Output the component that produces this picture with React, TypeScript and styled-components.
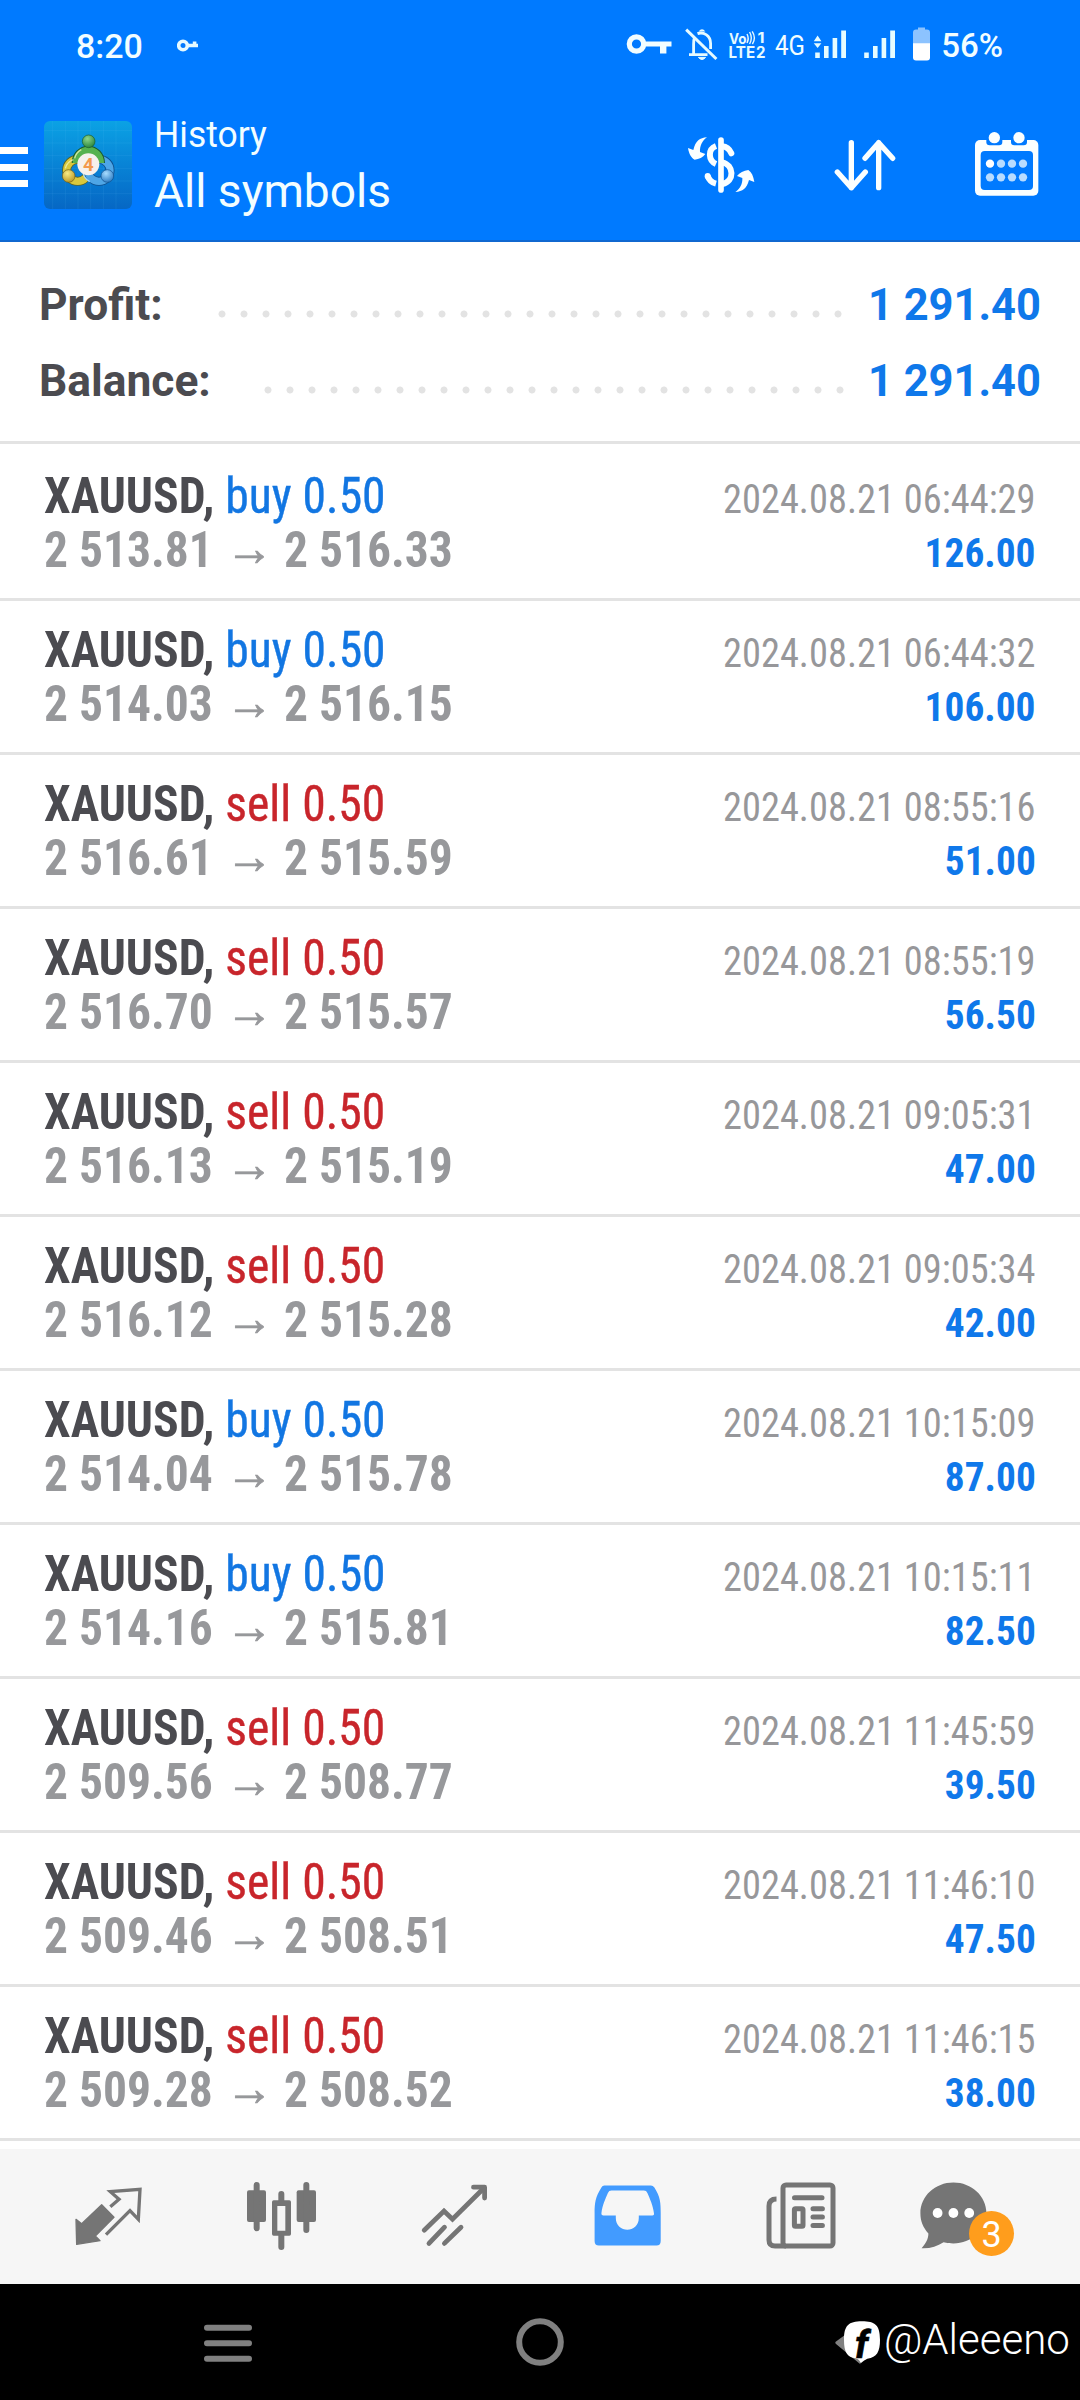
import React from "react";
import styled, { createGlobalStyle } from "styled-components";

const blue = "#007aff";
const valueBlue = "#0f78ea";

const GlobalStyle = createGlobalStyle`
  * { box-sizing: border-box; }
  body { margin: 0; background: #fff; }
  svg { display: block; flex: none; }
`;

const Screen = styled.div`
  width: 1080px;
  height: 2400px;
  display: flex;
  flex-direction: column;
  overflow: hidden;
  background: #fff;
  font-family: Roboto, sans-serif;
  -webkit-font-smoothing: antialiased;
`;

/* ---------- status bar ---------- */

const StatusBar = styled.div`
  flex: none;
  height: 91px;
  padding: 0 77px 0 76px;
  display: flex;
  align-items: center;
  justify-content: space-between;
  background: ${blue};
  color: #f2fdff;
`;

const StatusGroup = styled.div`
  display: flex;
  align-items: center;
`;

const StatusText = styled.span<{ $size: number }>`
  font-size: ${(p) => p.$size}px;
  font-weight: 500;
  line-height: 40px;
`;

const NetworkType = styled.span`
  width: 30px;
  margin: 0 8px 0 9px;
  font-size: 28px;
  line-height: 38px;
  transform: scaleX(0.86);
  transform-origin: left;
  white-space: nowrap;
`;

const Spacer = styled.span<{ $w: number }>`
  flex: none;
  width: ${(p) => p.$w}px;
`;

/* ---------- toolbar ---------- */

const Toolbar = styled.header`
  flex: none;
  height: 151px;
  padding: 0 39px 2px 0;
  display: flex;
  align-items: center;
  background: ${blue};
  border-bottom: 2px solid #1068d0;
  color: #f2fdff;
`;

const MenuButton = styled.div`
  width: 44px;
  display: flex;
  flex-direction: column;
  gap: 9.5px;
  padding-top: 5px;
`;

const MenuBar = styled.span`
  width: 27.5px;
  height: 7px;
  background: #fff;
`;

const Titles = styled.div`
  align-self: flex-start;
  flex: 1;
  padding: 24px 0 0 22px;
`;

const Title = styled.div`
  font-size: 36px;
  line-height: 40px;
  transform: scaleX(0.985);
  transform-origin: left;
`;

const Subtitle = styled.div`
  margin-top: 8px;
  font-size: 47px;
  line-height: 56px;
  transform: scaleX(0.98);
  transform-origin: left;
`;

const ToolbarActions = styled.div`
  display: flex;
  align-items: center;
  gap: 75px;
`;

/* ---------- summary ---------- */

const Summary = styled.section`
  flex: none;
  height: 202px;
  padding: 24px 39px 0;
  border-bottom: 3px solid #e3e3e3;
`;

const SummaryRow = styled.div`
  display: flex;
  align-items: center;
  height: 76px;
  font-size: 45px;
  font-weight: 700;
`;

const SummaryLabel = styled.span`
  color: #4b4b50;
  transform: scaleX(0.985);
  transform-origin: left;
`;

const DotLeader = styled.span<{ $width: number; $right: number }>`
  width: ${(p) => p.$width}px;
  height: 22px;
  margin: 19px ${(p) => p.$right}px 0 auto;
  background: radial-gradient(circle at center, #e3e3e3 3.1px, transparent 3.9px) 0 0 / 22px 22px;
`;

const SummaryValue = styled.span`
  width: 174px;
  display: flex;
  justify-content: flex-end;
  white-space: nowrap;
  color: ${valueBlue};
  transform: scaleX(0.966);
  transform-origin: right;
`;

/* ---------- deals ---------- */

const DealList = styled.main`
  flex: none;
  height: 1705px;
  padding-top: 3px;
`;

const DealRow = styled.article`
  height: 154px;
  padding: 22px 44px 0;
  border-bottom: 3px solid #e3e3e3;
`;

const DealLine = styled.div`
  height: 54px;
  display: flex;
  justify-content: space-between;
  align-items: baseline;
  font-stretch: 75%;
  white-space: pre;
`;

const Left = styled.span`
  font-size: 50px;
  line-height: 54px;
  transform: scaleX(0.952);
  transform-origin: left;
`;

const Right = styled.span`
  font-size: 41px;
  line-height: 41px;
  transform: scaleX(0.937);
  transform-origin: right;
`;

const Symbol = styled.b`
  font-weight: 700;
  color: #4b4b50;
`;

const Side = styled.span<{ $sell: boolean }>`
  color: ${(p) => (p.$sell ? "#c8252b" : "#1276e2")};
  -webkit-text-stroke: 0.4px currentColor;
`;

const Prices = styled(Left)`
  font-weight: 700;
  color: #97989b;
  transform: scaleX(0.95);
`;

const Arrow = styled.span`
  margin-left: 2px;
  line-height: 1;
  vertical-align: 2px;
  -webkit-text-stroke: 0.8px currentColor;
`;

const Time = styled(Right)`
  color: #97979a;
`;

const Profit = styled(Right)`
  font-weight: 700;
  color: ${valueBlue};
  transform: scaleX(0.96);
`;

/* ---------- bottom bars ---------- */

const TabBar = styled.nav`
  flex: none;
  height: 135px;
  padding: 0 21px;
  display: flex;
  background: #f6f6f6;
`;

const Tab = styled.div<{ $inset?: number }>`
  position: relative;
  flex: 1 1 0;
  display: flex;
  align-items: center;
  justify-content: center;
  padding-right: ${(p) => p.$inset ?? 0}px;
  min-width: 173px;
`;

const Badge = styled.span`
  position: absolute;
  left: 83px;
  top: 61.5px;
  width: 45px;
  height: 45px;
  border-radius: 50%;
  background: #ff9d1c;
  color: #fff;
  font-size: 36px;
  line-height: 48px;
  text-align: center;
`;

const SystemBar = styled.footer`
  position: relative;
  flex: none;
  height: 116px;
  background: #000;
  display: flex;
  align-items: center;
`;

const SystemKey = styled.div<{ $grow: number }>`
  flex: ${(p) => p.$grow};
  display: flex;
  justify-content: center;
`;

const Watermark = styled.div`
  position: absolute;
  left: 835px;
  top: 31px;
  display: flex;
  align-items: flex-start;
  color: #fff;
`;

const Handle = styled.span`
  margin-left: 3px;
  font-size: 42px;
  font-weight: 300;
  line-height: 50px;
`;

/* ---------- icons ---------- */

const SmallKey = () => (
  <svg width="22" height="40" viewBox="0 0 22 40" fill="none" stroke="#e6faff">
    <circle cx="6" cy="19.5" r="4.3" strokeWidth="3.6" />
    <path d="M10 19.5H21M17.6 20V15.5" strokeWidth="3.6" />
  </svg>
);

const VpnKey = () => (
  <svg width="47" height="40" viewBox="0 0 47 40">
    <circle cx="10.5" cy="18" r="7.2" fill="none" stroke="#f2fdff" strokeWidth="5.2" />
    <path d="M17 15.5H45.5V20.6H40.4V27.5H34V20.6H17Z" fill="#f2fdff" />
  </svg>
);

const MutedBell = () => (
  <svg width="33" height="40" viewBox="0 0 33 40" fill="none" stroke="#e6faff" strokeWidth="2.8">
    <path d="M9.5 11.5C8.6 13.5 8.6 16 8.6 18V28.5M4 28.6H22.5" />
    <path d="M12.5 7.6C18 5.6 25.6 9 25.6 17.5V23" />
    <path d="M13.6 5.4Q17 1 20.4 5.4Z" fill="#e6faff" stroke="none" />
    <path d="M13.4 31.4H20.6Q17 35.6 13.4 31.4Z" fill="#e6faff" strokeWidth="1" />
    <path d="M1.2 3.6L31.4 33" strokeWidth="3" />
  </svg>
);

const VoLte = () => (
  <svg width="38" height="40" viewBox="0 0 38 40" fill="#e6faff" fontFamily="Inter, sans-serif" fontWeight="700">
    <text x="1" y="17.6" fontSize="14.5" textLength="17.5" lengthAdjust="spacingAndGlyphs">Vo</text>
    <text x="29.5" y="17" fontSize="15" textLength="7" lengthAdjust="spacingAndGlyphs">1</text>
    <text x="0.6" y="32.4" fontSize="15.6" textLength="26.5" lengthAdjust="spacingAndGlyphs">LTE</text>
    <text x="28" y="32.4" fontSize="15.6" textLength="9.5" lengthAdjust="spacingAndGlyphs">2</text>
    <path
      d="M19 8Q21.4 12.4 19 17M21.6 6Q25 12 21.6 18M24.2 5.4Q28.4 11.8 24.4 18"
      fill="none"
      stroke="#e6faff"
      strokeWidth="1.4"
    />
  </svg>
);

const Bars = ({ data }: { data?: boolean }) => (
  <svg width="34" height="40" viewBox="0 0 34 40" fill="#e6fcff">
    <path d="M2.2 26.4H6.8V32H2.2ZM11 20H15.6V32H11ZM19.6 12H24.2V32H19.6ZM28.2 4.4H33V32H28.2Z" />
    {data && <path d="M0.8 15.2L4.6 9.4L8.4 15.2ZM0.8 17.2H8.4L4.6 22Z" />}
  </svg>
);

const Battery = () => (
  <svg width="19" height="40" viewBox="0 0 19 40">
    <path d="M6 1.6H13V3.4H15Q18 3.4 18 6.4V18H1V6.4Q1 3.4 4 3.4H6Z" fill="#8cc3ff" />
    <path d="M1 17.2H18V31.5Q18 34.5 15 34.5H4Q1 34.5 1 31.5Z" fill="#fff" />
  </svg>
);

const AppLogo = () => (
  <svg width="88" height="88" viewBox="0 0 264 264">
    <defs>
      <linearGradient id="tile" x1="0" y1="0" x2="0" y2="1">
        <stop offset="0" stopColor="#0ba2e4" />
        <stop offset="0.5" stopColor="#0883d6" />
        <stop offset="1" stopColor="#0667c4" />
      </linearGradient>
      <radialGradient id="green" cx="0.4" cy="0.3" r="0.8">
        <stop offset="0" stopColor="#8fd68a" />
        <stop offset="1" stopColor="#1f7d35" />
      </radialGradient>
      <radialGradient id="gold" cx="0.4" cy="0.3" r="0.8">
        <stop offset="0" stopColor="#f7eb86" />
        <stop offset="1" stopColor="#b5901a" />
      </radialGradient>
      <radialGradient id="sky" cx="0.4" cy="0.3" r="0.8">
        <stop offset="0" stopColor="#a8dcff" />
        <stop offset="1" stopColor="#1f72bd" />
      </radialGradient>
    </defs>
    <rect width="264" height="264" rx="18" fill="url(#tile)" />
    <path
      d="M0 28H264M0 66H264M0 104H264M0 142H264M0 180H264M0 218H264M26 0V264M64 0V264M102 0V264M140 0V264M178 0V264M216 0V264"
      stroke="#6fd0ff"
      strokeOpacity="0.12"
      strokeWidth="2.5"
    />
    <g fill="none">
      <circle cx="101" cy="148" r="33" stroke="#5c6322" strokeWidth="27" />
      <circle cx="101" cy="148" r="33" stroke="#d9c83c" strokeWidth="22" />
      <circle cx="165" cy="148" r="33" stroke="#0f4f8c" strokeWidth="27" />
      <circle cx="165" cy="148" r="33" stroke="#4fa6e6" strokeWidth="22" />
      <path d="M137 182Q120 172 118 158" stroke="#a9dcfb" strokeWidth="4" />
      <path d="M97 126A36 38 0 1 1 169 126" stroke="#1c5a2c" strokeWidth="28" />
      <path d="M97 126A36 38 0 1 1 169 126" stroke="#56b24f" strokeWidth="22" />
      <path d="M92 112A42 40 0 0 1 112 86M64 142A38 38 0 0 1 88 116" stroke="#f0f3b4" strokeOpacity="0.8" strokeWidth="4" />
    </g>
    <circle cx="134" cy="61" r="19" fill="url(#green)" stroke="#1c5a2c" strokeWidth="2" />
    <circle cx="74" cy="165" r="19" fill="url(#gold)" stroke="#6d5a18" strokeWidth="2" />
    <circle cx="190" cy="165" r="19" fill="url(#sky)" stroke="#0f4f8c" strokeWidth="2" />
    <circle cx="133" cy="130" r="33" fill="#f6f1ec" />
    <text x="133" y="150" textAnchor="middle" fontFamily="Roboto, sans-serif" fontWeight="700" fontSize="56" fill="#f39a4d">4</text>
  </svg>
);

const CurrencyIcon = () => (
  <svg width="80" height="90" viewBox="0 0 240 270">
    <g fill="none" stroke="#fbffff" strokeWidth="18">
      <path d="M126 60V210" strokeWidth="17" strokeLinecap="round" />
      <path d="M130 79Q148 80 157 100" strokeLinecap="round" />
      <path d="M111 78C85 88 88 122 111 132" />
      <path d="M130 127C165 135 168 184 130 192" />
      <path d="M86 168Q92 186 111 191" />
      <path d="M86 168V169" strokeLinecap="round" />
    </g>
    <path d="M84 52C62 54 50 62 43 90L27 84C30 102 37 114 47 119C60 118 72 112 79 102L63 96C62 78 70 62 84 52Z" fill="#fbffff" />
    <path d="M169 216C191 214 203 206 210 180L226 186C223 168 218 156 208 150C194 152 182 158 174 168L190 174C191 192 183 206 169 216Z" fill="#fbffff" />
  </svg>
);

const SortIcon = () => (
  <svg width="64" height="90" viewBox="462 0 192 270" fill="none" stroke="#fbffff" strokeWidth="16" strokeLinecap="round" strokeLinejoin="round">
    <path d="M514 68V203M472 156L514 203L556 156" />
    <path d="M596 203V68M555 115L596 68L638 115" />
  </svg>
);

const CalendarIcon = () => (
  <svg width="68" height="90" viewBox="879 0 204 270">
    <rect x="885" y="60" width="190" height="167" rx="15" fill="#fbffff" />
    <rect x="902" y="93" width="157" height="117" rx="12" fill={blue} />
    {[943, 1017].map((x) => (
      <g key={x}>
        <path d={`M${x - 24} 55V66Q${x - 24} 76 ${x - 14} 76H${x + 14}Q${x + 24} 76 ${x + 24} 66V55Z`} fill={blue} />
        <circle cx={x} cy="53" r="17" fill="#fbffff" />
      </g>
    ))}
    {[131, 172].map((y) =>
      [930, 963, 996, 1029].map((x) => (
        <circle key={`${x}-${y}`} cx={x} cy={y} r="12.5" fill={x === 930 && y === 131 ? "#fff" : "#b8dcff"} />
      ))
    )}
  </svg>
);

const gray = "#757575";

const QuotesIcon = () => (
  <svg width="80" height="80" viewBox="25 51 240 240">
    <path d="M49 178L66 191L126 134L163 172L107 228L121 242L51 253Z" fill={gray} stroke={gray} strokeWidth="4" strokeLinejoin="round" />
    <path d="M152 140L178 118L152 95L241 88L236 178L211 152L139 224" fill="none" stroke={gray} strokeWidth="10" />
  </svg>
);

const ChartIcon = () => (
  <svg width="80" height="80" viewBox="542 51 240 240">
    <g fill={gray}>
      <rect x="560" y="91" width="57" height="95" rx="6" />
      <rect x="709" y="91" width="58" height="95" rx="6" />
      <path fillRule="evenodd" d="M640 121H687Q692 121 692 126V222Q692 227 687 227H640Q635 227 635 222V126Q635 121 640 121ZM651 138V212H675V138Z" />
    </g>
    <path d="M589 75V205M738 75V210M663 102V124M663 222V261" stroke={gray} strokeWidth="18" strokeLinecap="round" />
  </svg>
);

const TradeIcon = () => (
  <svg width="80" height="80" viewBox="0 0 80 80" fill="none" stroke={gray} strokeWidth="4.8" strokeLinecap="round">
    <path d="M10.2 53.2L30 34L38.5 42.2L70 11" strokeLinejoin="miter" />
    <path d="M59.5 10.2H70.6V21" strokeLinejoin="round" />
    <path d="M30.5 50.2L15 66.4M47 50.2L30.4 66.4" />
  </svg>
);

const HistoryIcon = () => (
  <svg width="80" height="80" viewBox="0.6 0 80 80">
    <path
      fillRule="evenodd"
      fill="#429bff"
      d="M18 8.5H64.5Q66.5 8.5 68 10.5C74 20 74.3 26 74.3 36V64Q74.3 68.5 70 68.5H12.5Q8.2 68.5 8.2 64V36C8.2 26 9 20 15 10.5Q16 8.5 18 8.5ZM25 13.6Q22.5 13.6 21.5 16C19 22 16 28 15 36.4Q14.8 38.4 17 38.4H29.4V41C29.4 56.5 52.4 56.5 52.4 41V38.4H66Q68 38.4 67.6 36.4C66.4 28 63.6 22 61 16Q60 13.6 57.5 13.6Z"
    />
  </svg>
);

const NewsIcon = () => (
  <svg width="80" height="80" viewBox="0 0 80 80" fill="none" stroke={gray} strokeWidth="5">
    <rect x="23" y="8" width="50" height="61" rx="3" />
    <path d="M16.5 22Q9 22 9 29V63Q9 69 15 69H26" />
    <path d="M34.5 20.8H62M53 31.8H62.4M53 40H62.4M53 48.6H62.4" strokeLinecap="round" />
    <rect x="34.4" y="31.8" width="8.6" height="17.4" rx="1" />
  </svg>
);

const ChatIcon = () => (
  <svg width="80" height="80" viewBox="0 0 80 80">
    <path
      d="M33.4 5.5C51.6 5.5 66.4 19 66.4 36.3C66.4 53.4 51.6 66.4 33.4 66.4C30 66.4 27 66 23.6 65.2C17 69.5 10 71.6 1.6 71.2C5.6 66.6 8.4 62 8.4 56.4C3 50.6 0.4 44.2 0.4 36.3C0.4 19 15.2 5.5 33.4 5.5Z"
      fill={gray}
    />
    {[17.6, 33.4, 49.2].map((x) => (
      <circle key={x} cx={x} cy="36" r="4.9" fill="#fff" />
    ))}
  </svg>
);

const RecentsKey = () => (
  <svg width="50" height="40" viewBox="0 -1.2 50 40" stroke="#808080" strokeWidth="6" strokeLinecap="round">
    <path d="M4 4.5H46M4 20H46M4 35.5H46" />
  </svg>
);

const HomeKey = () => (
  <svg width="50" height="50" viewBox="0 0 50 50">
    <circle cx="25" cy="25" r="20.8" fill="none" stroke="#808080" strokeWidth="6" />
  </svg>
);

const BackAndLogo = () => (
  <svg width="46" height="60" viewBox="0 0 138 180">
    <path d="M2 80L76 26V148L4 88Q-1 84 2 80Z" fill="#808080" />
    <path d="M81 19C120 19 135 30 135 74C135 110 126 126 97 131Q88 134 77 145Q74 133 62 130C36 126 27 112 27 74C27 32 40 19 81 19Z" fill="#fff" />
    <text
      x="80"
      y="128"
      textAnchor="middle"
      fontFamily="Roboto, sans-serif"
      fontWeight="700"
      fontStyle="italic"
      fontSize="114"
      fill="#000"
      stroke="#000"
      strokeWidth="2"
    >
      f
    </text>
  </svg>
);

/* ---------- data ---------- */

type Deal = { side: "buy" | "sell"; open: string; close: string; time: string; profit: string };

const deals: Deal[] = [
  { side: "buy", open: "2 513.81", close: "2 516.33", time: "06:44:29", profit: "126.00" },
  { side: "buy", open: "2 514.03", close: "2 516.15", time: "06:44:32", profit: "106.00" },
  { side: "sell", open: "2 516.61", close: "2 515.59", time: "08:55:16", profit: "51.00" },
  { side: "sell", open: "2 516.70", close: "2 515.57", time: "08:55:19", profit: "56.50" },
  { side: "sell", open: "2 516.13", close: "2 515.19", time: "09:05:31", profit: "47.00" },
  { side: "sell", open: "2 516.12", close: "2 515.28", time: "09:05:34", profit: "42.00" },
  { side: "buy", open: "2 514.04", close: "2 515.78", time: "10:15:09", profit: "87.00" },
  { side: "buy", open: "2 514.16", close: "2 515.81", time: "10:15:11", profit: "82.50" },
  { side: "sell", open: "2 509.56", close: "2 508.77", time: "11:45:59", profit: "39.50" },
  { side: "sell", open: "2 509.46", close: "2 508.51", time: "11:46:10", profit: "47.50" },
  { side: "sell", open: "2 509.28", close: "2 508.52", time: "11:46:15", profit: "38.00" },
];

export default function App() {
  return (
    <Screen>
      <GlobalStyle />
      <StatusBar>
        <StatusGroup>
          <StatusText $size={34}>8:20</StatusText>
          <Spacer $w={34} />
          <SmallKey />
        </StatusGroup>
        <StatusGroup>
          <VpnKey />
          <Spacer $w={12} />
          <MutedBell />
          <Spacer $w={10} />
          <VoLte />
          <NetworkType>4G</NetworkType>
          <Bars data />
          <Spacer $w={15} />
          <Bars />
          <Spacer $w={16} />
          <Battery />
          <Spacer $w={10} />
          <StatusText $size={33}>56%</StatusText>
        </StatusGroup>
      </StatusBar>

      <Toolbar>
        <MenuButton>
          <MenuBar />
          <MenuBar />
          <MenuBar />
        </MenuButton>
        <AppLogo />
        <Titles>
          <Title>History</Title>
          <Subtitle>All symbols</Subtitle>
        </Titles>
        <ToolbarActions>
          <CurrencyIcon />
          <SortIcon />
          <CalendarIcon />
        </ToolbarActions>
      </Toolbar>

      <Summary>
        <SummaryRow>
          <SummaryLabel>Profit:</SummaryLabel>
          <DotLeader $width={638} $right={18} />
          <SummaryValue>1 291.40</SummaryValue>
        </SummaryRow>
        <SummaryRow>
          <SummaryLabel>Balance:</SummaryLabel>
          <DotLeader $width={594} $right={16} />
          <SummaryValue>1 291.40</SummaryValue>
        </SummaryRow>
      </Summary>

      <DealList>
        {deals.map((d) => (
          <DealRow key={d.time}>
            <DealLine>
              <Left>
                <Symbol>XAUUSD,</Symbol> <Side $sell={d.side === "sell"}>{d.side} 0.50</Side>
              </Left>
              <Time>2024.08.21 {d.time}</Time>
            </DealLine>
            <DealLine>
              <Prices>
                {d.open} <Arrow>→</Arrow> {d.close}
              </Prices>
              <Profit>{d.profit}</Profit>
            </DealLine>
          </DealRow>
        ))}
      </DealList>

      <TabBar>
        <Tab><QuotesIcon /></Tab>
        <Tab><ChartIcon /></Tab>
        <Tab><TradeIcon /></Tab>
        <Tab><HistoryIcon /></Tab>
        <Tab><NewsIcon /></Tab>
        <Tab $inset={25}>
          <ChatIcon />
          <Badge>3</Badge>
        </Tab>
      </TabBar>

      <SystemBar>
        <SystemKey $grow={456}><RecentsKey /></SystemKey>
        <SystemKey $grow={168}><HomeKey /></SystemKey>
        <SystemKey $grow={456} />
        <Watermark>
          <BackAndLogo />
          <Handle>@Aleeeno</Handle>
        </Watermark>
      </SystemBar>
    </Screen>
  );
}
